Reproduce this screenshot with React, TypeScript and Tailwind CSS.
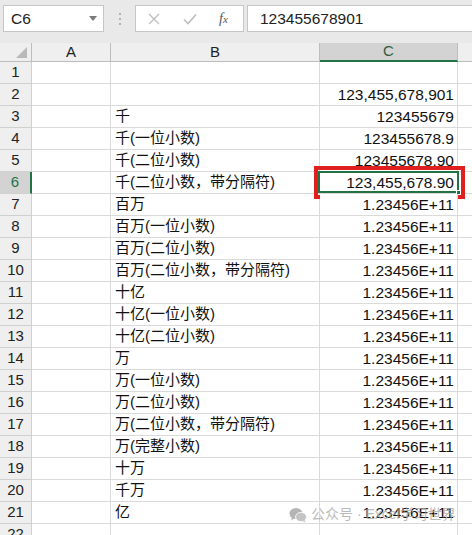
import React from 'react';

const rows: [string, string][] = [
  ['', ''],
  ['', '123,455,678,901'],
  ['千', '123455679'],
  ['千(一位小数)', '123455678.9'],
  ['千(二位小数)', '123455678.90'],
  ['千(二位小数，带分隔符)', '123,455,678.90'],
  ['百万', '1.23456E+11'],
  ['百万(一位小数)', '1.23456E+11'],
  ['百万(二位小数)', '1.23456E+11'],
  ['百万(二位小数，带分隔符)', '1.23456E+11'],
  ['十亿', '1.23456E+11'],
  ['十亿(一位小数)', '1.23456E+11'],
  ['十亿(二位小数)', '1.23456E+11'],
  ['万', '1.23456E+11'],
  ['万(一位小数)', '1.23456E+11'],
  ['万(二位小数)', '1.23456E+11'],
  ['万(二位小数，带分隔符)', '1.23456E+11'],
  ['万(完整小数)', '1.23456E+11'],
  ['十万', '1.23456E+11'],
  ['千万', '1.23456E+11'],
  ['亿', '1.23456E+11'],
  ['', ''],
];

const font = { fontFamily: '"Liberation Sans", "Noto Sans CJK SC", sans-serif' };

function FormulaBar() {
  return (
    <div className="flex h-[43px] items-start gap-0 bg-[#e9e9e9] pt-[5px]">
      {/* name box */}
      <div className="ml-[3px] flex h-[27px] w-[101px] items-center justify-between border border-[#c6c6c6] bg-white pl-[7px] pr-[6px] text-[15.5px] text-[#222]">
        <span>C6</span>
        <svg width="8" height="5" viewBox="0 0 8 5">
          <path d="M0 0h8L4 5z" fill="#7a7a7a" />
        </svg>
      </div>
      <div className="flex h-[27px] w-[31px] flex-col items-center justify-center gap-[3px]">
        <span className="h-[2px] w-[2px] bg-[#b3b3b3]" />
        <span className="h-[2px] w-[2px] bg-[#b3b3b3]" />
        <span className="h-[2px] w-[2px] bg-[#b3b3b3]" />
      </div>
      <div className="flex h-[27px] w-[109px] items-center border border-[#c6c6c6] bg-white">
        <svg className="ml-[12px]" width="12" height="12" viewBox="0 0 12 12">
          <path d="M1 1l10 10M11 1L1 11" stroke="#bdbdbd" strokeWidth="1.3" />
        </svg>
        <svg className="ml-[23px]" width="14" height="12" viewBox="0 0 14 12">
          <path d="M1 6.5l4 4L13 1.5" stroke="#bdbdbd" strokeWidth="1.6" fill="none" />
        </svg>
        <span
          className="ml-[22px] text-[14px] italic text-[#555]"
          style={{ fontFamily: '"Liberation Serif", serif' }}
        >
          f<span className="text-[11px]">x</span>
        </span>
      </div>
      <div className="ml-[3px] flex h-[27px] flex-1 items-center border border-r-0 border-[#c6c6c6] bg-white pl-[12px] text-[15.5px] text-[#222]">
        123455678901
      </div>
    </div>
  );
}

function HeaderRow() {
  return (
    <div className="flex h-[19px] text-[15px] text-[#222]">
      <div className="relative w-[32px] shrink-0 border-r border-b border-[#bdbdbd] bg-[#efefef]">
        <svg className="absolute bottom-[3px] right-[4px]" width="11" height="11" viewBox="0 0 11 11">
          <path d="M11 0v11H0z" fill="#b9b9b9" />
        </svg>
      </div>
      <div className="flex w-[79px] shrink-0 items-center justify-center border-r border-b border-[#bdbdbd] bg-[#efefef]">A</div>
      <div className="flex w-[209px] shrink-0 items-center justify-center border-r border-b border-[#bdbdbd] bg-[#efefef]">B</div>
      <div className="flex w-[138px] shrink-0 items-center justify-center border-r border-b-2 border-r-[#bdbdbd] border-b-[#217346] bg-[#d3d3d3] text-[#2f5d3f]">C</div>
      <div className="flex-1 border-b border-[#bdbdbd] bg-[#efefef]" />
    </div>
  );
}

function DataRow({ n, b, c }: { n: number; b: string; c: string }) {
  const sel = n === 6;
  return (
    <div className="flex h-[22px] text-[15px] text-[#111]">
      <div
        className={
          sel
            ? 'flex w-[32px] shrink-0 items-center justify-center border-r-2 border-b border-r-[#217346] border-b-[#d0d0d0] bg-[#d3d3d3] text-[#217346]'
            : 'flex w-[32px] shrink-0 items-center justify-center border-r border-b border-[#d0d0d0] bg-[#efefef] text-[#222]'
        }
      >
        {n}
      </div>
      <div className="w-[79px] shrink-0 border-r border-b border-[#dadada] bg-white" />
      <div className="flex w-[209px] shrink-0 items-center overflow-hidden whitespace-nowrap border-r border-b border-[#dadada] bg-white pl-[4px]">
        {b}
      </div>
      <div className="relative flex w-[138px] shrink-0 items-center justify-end whitespace-nowrap border-r border-b border-[#dadada] bg-white pr-[3px] text-[15.5px]">
        {c}
        {sel && (
          <>
            <div className="absolute -top-[1px] -left-[2px] -right-[2px] -bottom-[0px] border-2 border-[#217346]" />
            <div className="absolute -bottom-[2px] -right-[4px] h-[5px] w-[5px] border border-white bg-[#217346]" />
            <div className="absolute -top-[6px] -left-[6px] -right-[8px] -bottom-[6px] border-4 border-[#e0201f]" />
          </>
        )}
      </div>
      <div className="flex-1 border-b border-[#dadada] bg-white" />
    </div>
  );
}

export default function App() {
  return (
    <div className="relative h-[535px] w-[472px] overflow-hidden bg-white" style={font}>
      <FormulaBar />
      <HeaderRow />
      {rows.map(([b, c], i) => (
        <DataRow key={i} n={i + 1} b={b} c={c} />
      ))}
      {/* watermark */}
      <div className="pointer-events-none absolute left-[289px] top-[504px] flex items-center gap-[4px] text-[14px] text-[#a8a8a8]/80">
        <svg width="18" height="16" viewBox="0 0 18 16">
          <ellipse cx="7" cy="6.5" rx="6.5" ry="5.5" fill="#b5b5b5" />
          <path d="M3 10.5l-1 3 3.5-2z" fill="#b5b5b5" />
          <ellipse cx="12" cy="10" rx="5.5" ry="4.6" fill="#c4c4c4" stroke="#fff" strokeWidth="0.8" />
          <path d="M15.5 13l1 2.5-3-1.5z" fill="#c4c4c4" />
        </svg>
        <span>公众号 · Excel学习世界</span>
      </div>
    </div>
  );
}
